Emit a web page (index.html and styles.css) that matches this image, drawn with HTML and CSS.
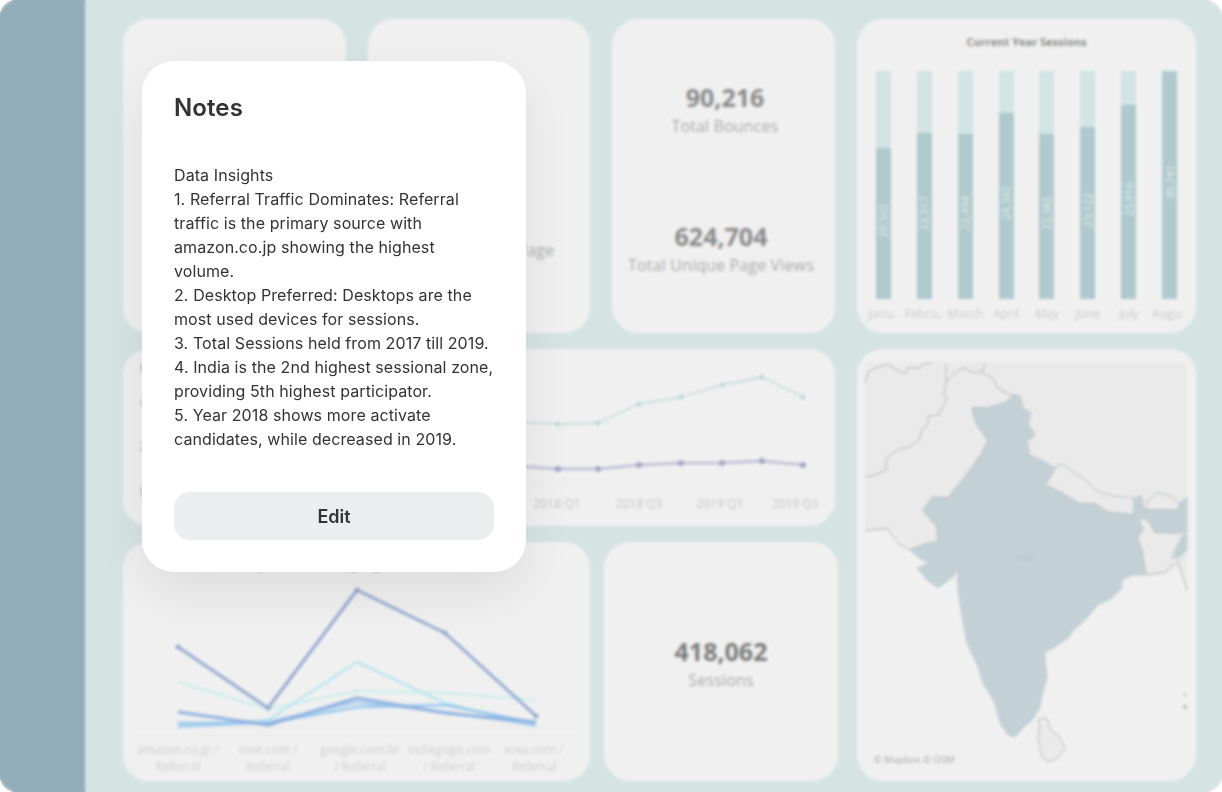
FILE: index.html
```html
<!DOCTYPE html>
<html lang="en">
<head>
<meta charset="utf-8">
<title>Notes</title>
<link rel="stylesheet" href="styles.css">
</head>
<body>
<div class="frame">
  <div class="dashboard">
    <aside class="sidebar"></aside>
    <main class="content">
      <div class="left">
        <div class="row row-top">
          <section class="card card-first"></section>
          <section class="card card-second stats stats-second">
            <div class="stat"><div class="stat-label">Avg. Views per Page</div></div>
          </section>
          <section class="card card-first stats">
            <div class="stat stat-right"><div class="stat-value">90,216</div><div class="stat-label">Total Bounces</div></div>
            <div class="stat stat-left"><div class="stat-value">624,704</div><div class="stat-label">Total Unique Page Views</div></div>
          </section>
        </div>
        <section class="card row-mid">
          <svg class="chart" viewBox="123 349 712 177" aria-label="Sessions by quarter">
            <g class="axis-text"><text x="140" y="372">6</text><text x="140" y="406">4</text><text x="140" y="451">2</text><text x="140" y="496">0</text></g>
            <line class="grid" x1="500" y1="482" x2="822" y2="482"/>
            <polyline class="q-top" points="500,421 558,424 598,423 639,404 681,397 722,385 762,377 803,397"/>
            <g class="q-top-dots"><circle cx="558" cy="424" r="2.5"/><circle cx="598" cy="423" r="2.5"/><circle cx="639" cy="404" r="2.5"/><circle cx="681" cy="397" r="2.5"/><circle cx="722" cy="385" r="2.5"/><circle cx="762" cy="377" r="2.5"/><circle cx="803" cy="397" r="2.5"/></g>
            <polyline class="q-bottom" points="500,465 558,469 598,469 639,465 681,463 722,463 762,461 803,465"/>
            <g class="q-bottom-dots"><circle cx="558" cy="469" r="3"/><circle cx="598" cy="469" r="3"/><circle cx="639" cy="465" r="3"/><circle cx="681" cy="463" r="3"/><circle cx="722" cy="463" r="3"/><circle cx="762" cy="461" r="3"/><circle cx="803" cy="465" r="3"/></g>
            <g class="tick-text"><text x="557" y="508">2018 Q1</text><text x="639" y="508">2018 Q3</text><text x="720" y="508">2019 Q1</text><text x="795" y="508">2019 Q3</text></g>
          </svg>
        </section>
        <div class="row row-bottom">
          <section class="card card-wide">
            <svg class="chart" viewBox="123 542 467 239" aria-label="Sessions by referral source">
              <text class="chart-title" x="201" y="569">Sessions by Referral Landing Page</text>
              <line class="grid" x1="135" y1="727" x2="578" y2="727"/>
              <line class="grid" x1="135" y1="735" x2="578" y2="735"/>
              <polyline class="s3" points="178,682 268,709 357,691 445,693 536,700"/>
              <polyline class="s2" points="178,725 268,720 357,662 445,703 536,727"/>
              <polyline class="s6" points="178,727 268,722 357,702 445,712 536,725"/>
              <polyline class="s5" points="178,723 268,723 357,707 445,705 536,723"/>
              <polyline class="s4" points="178,712 268,725 357,698 445,713 536,722"/>
              <polyline class="s1" points="178,647 268,708 357,590 445,633 536,716"/>
              <g class="s1-dots"><circle cx="178" cy="647" r="2.5"/><circle cx="268" cy="708" r="2.5"/><circle cx="357" cy="590" r="2.5"/><circle cx="445" cy="633" r="2.5"/><circle cx="536" cy="716" r="2.5"/></g>
              <g class="tick-text tick-soft">
                <text x="178" y="754">amazon.co.jp /</text><text x="178" y="771">Referral</text>
                <text x="268" y="754">cnet.com /</text><text x="268" y="771">Referral</text>
                <text x="360" y="754">google.com.br</text><text x="360" y="771">/ Referral</text>
                <text x="449" y="754">indiegogo.com</text><text x="449" y="771">/ Referral</text>
                <text x="534" y="754">xrea.com /</text><text x="534" y="771">Referral</text>
              </g>
            </svg>
          </section>
          <section class="card card-sessions stats">
            <div class="stat"><div class="stat-value stat-strong">418,062</div><div class="stat-label">Sessions</div></div>
          </section>
        </div>
      </div>
      <div class="right">
        <section class="card card-bars">
          <h2 class="bars-title">Current Year Sessions</h2>
          <div class="bars">
            <div class="bar-col"><div class="bar"><div class="bar-fill" style="height:66.4%"><span class="bar-value">20,502</span></div></div><div class="bar-label">Janu..</div></div>
            <div class="bar-col"><div class="bar"><div class="bar-fill" style="height:72.7%"><span class="bar-value">22,517</span></div></div><div class="bar-label">Febru..</div></div>
            <div class="bar-col"><div class="bar"><div class="bar-fill" style="height:72.4%"><span class="bar-value">22,434</span></div></div><div class="bar-label">March</div></div>
            <div class="bar-col"><div class="bar"><div class="bar-fill" style="height:81.5%"><span class="bar-value">24,342</span></div></div><div class="bar-label">April</div></div>
            <div class="bar-col"><div class="bar"><div class="bar-fill" style="height:72.4%"><span class="bar-value">22,385</span></div></div><div class="bar-label">May</div></div>
            <div class="bar-col"><div class="bar"><div class="bar-fill" style="height:75.4%"><span class="bar-value">23,122</span></div></div><div class="bar-label">June</div></div>
            <div class="bar-col"><div class="bar"><div class="bar-fill" style="height:85%"><span class="bar-value">25,916</span></div></div><div class="bar-label">July</div></div>
            <div class="bar-col"><div class="bar"><div class="bar-fill" style="height:100%"><span class="bar-value">30,741</span></div></div><div class="bar-label">Augu..</div></div>
          </div>
        </section>
        <section class="card card-map">
          <svg class="chart" viewBox="857 349 339 432" aria-label="Map of India">
            <path class="land" d="M865 362H1187V590L1184 585 1180 572 1177 565 1174 572 1170 570 1165 574 1150 576 1140 570 1060 560 930 565 910 550 899 540 887 528 865 531Z"/>
            <path class="india" d="M1015 395L1020.7 396.7 1023 408 1031 413 1028 425 1035 433 1033 438 1027 440 1030 455 1041.7 460 1055 468 1045 485 1062 493 1078 503 1095 504 1108 512 1133 515 1134 498 1142 496 1144 510 1178 510 1180 503 1186 498H1187V533L1175 533 1155 532 1148 520 1138 518 1143 530 1137 538 1142 550 1145 570 1147 575 1133 575 1122 580 1122 588 1112 598 1098 605 1085 620 1072 632 1068 638 1055 647 1045 652 1045 660 1047 677 1042 695 1040 708 1032 720 1023 728 1015 737 1008 735 1000 723 995 703 983 683 978 667 967 643 962 617 958 590 957 568 953 577 938 588 927 580 917 568 930 563 922 560 910 550 925 544 938 542 937 527 923 510 933 497 948 498 965 477 982 453 988 440 977 425 972 408 988 408 1005 403Z"/>
            <path class="india" d="M1183 535L1175 550 1172 558 1180 557 1187 550V535Z"/>
            <path class="border" d="M865 383L868 372 875 368 888 364 897 370 905 374 908 368 920 368 923 364 932 363"/>
            <path class="border" d="M946 363V382L955 373 962 368 972 372 982 372 986 363M983 373L993 378 998 388 1010 395 1015 395"/>
            <path class="border" d="M946 382L944 393 947 400 942 408 938 415 929 416 927 425 922 430 919 440 910 447 900 449 890 455 886 460 886 470 875 475 866 477"/>
            <path class="border" d="M865 531L887 528 898 543 910 550"/>
            <path class="border" d="M1147 575L1165 572 1175 563M1177 560L1184 580 1187 590"/>
            <path class="border-soft" d="M1015 395L1005 403 988 408 972 408 977 425 988 440 982 453 965 477 948 498 933 497 923 510 937 527 938 542 925 544 910 550"/>
            <path class="border-soft" d="M1055 468L1045 485 1062 493 1078 503 1095 504 1108 512 1133 515M1055 468L1062 464 1075 473 1088 482 1095 490 1112 496 1134 498M1145 510L1178 510 1180 505 1172 497 1158 492 1148 500 1145 510"/>
            <path class="border-soft" d="M1138 518L1143 530 1137 538 1142 550 1145 570M1148 520L1155 532 1175 533"/>
            <path class="lanka" d="M1043 717L1048 720 1050 730 1060 737 1065 748 1058 758 1048 762 1042 757 1038 737 1040 727 1038 720Z"/>
            <circle class="dot" cx="1185" cy="695" r="1.2"/>
            <circle class="dot" cx="1185" cy="707" r="1.8"/>
            <text class="map-label" x="1025" y="561">India</text>
            <text class="map-credit" x="874" y="763">© Mapbox © OSM</text>
          </svg>
        </section>
      </div>
    </main>
  </div>
  <div class="veil"></div>
  <div class="modal">
    <h1 class="modal-title">Notes</h1>
    <p class="modal-body">Data Insights<br>1. Referral Traffic Dominates: Referral traffic is the primary source with amazon.co.jp showing the highest volume.<br>2. Desktop Preferred: Desktops are the most used devices for sessions.<br>3. Total Sessions held from 2017 till 2019.<br>4. India is the 2nd highest sessional zone, providing 5th highest participator.<br>5. Year 2018 shows more activate candidates, while decreased in 2019.</p>
    <button class="modal-button" type="button">Edit</button>
  </div>
</div>
</body>
</html>
```
FILE: styles.css
```css
* { box-sizing: border-box; }
html, body { margin: 0; padding: 0; background: #fff; }
body { width: 1222px; height: 792px; overflow: hidden; font-family: "Open Sans", "Liberation Sans", sans-serif; }

.frame { position: relative; width: 1222px; height: 792px; overflow: hidden; border-radius: 16px; background: #d5e4e3; }
.dashboard { display: flex; width: 100%; height: 100%; }
.sidebar { flex: 0 0 85px; background: #91adb9; }
.content { flex: 1; display: flex; gap: 22px; padding: 19px 26px 11px 38px; }
.left { flex: 0 0 712px; min-width: 0; display: flex; flex-direction: column; gap: 16px; }
.right { flex: 0 0 339px; display: flex; flex-direction: column; gap: 16px; }
.row { display: flex; }
.row-top { flex: 0 0 314px; gap: 22px; }
.row-mid { flex: 0 0 177px; }
.row-bottom { flex: 0 0 239px; gap: 14px; }

.card { background: #f0f0f0; border-radius: 26px; overflow: hidden; }
.card-first { flex: 0 0 223px; }
.card-second { flex: 0 0 222px; }
.card-wide { flex: 0 0 467px; }
.card-sessions { flex: 0 0 234px; }
.card-bars { flex: 0 0 314px; padding: 16px 6px 0; }
.card-map { flex: 0 0 432px; }
.chart { display: block; width: 100%; height: 100%; }

.stats { display: flex; flex-direction: column; align-items: center; gap: 83px; padding-top: 63px; }
.stats-second { padding-top: 217px; }
.card-sessions { padding-top: 94px; }
.stat { text-align: center; }
.stat-right { margin-left: 3px; }
.stat-left { margin-right: 5px; }
.stat-value { font-size: 25px; line-height: 30px; font-weight: 700; color: #8a8a8a; }
.stat-strong { color: #7b7b7b; }
.stat-label { font-size: 16px; line-height: 24px; letter-spacing: .15px; color: #adadad; margin-top: 2px; white-space: nowrap; }

.bars-title { margin: 0; font-size: 11px; line-height: 14px; font-weight: 700; color: #8d8d8d; text-align: center; }
.bars { display: flex; margin-top: 22px; }
.bar-col { flex: 1; display: flex; flex-direction: column; align-items: center; }
.bar { position: relative; width: 15px; height: 228px; background: #d2e4e3; display: flex; flex-direction: column; justify-content: flex-end; }
.bar-fill { background: #afc9cd; display: flex; align-items: center; justify-content: center; padding-bottom: 6px; }
.bar-value { writing-mode: vertical-rl; transform: rotate(180deg); font-size: 11px; line-height: 12px; color: #e4eeee; white-space: nowrap; }
.bar-label { margin-top: 7px; font-size: 12px; line-height: 16px; color: #cdcdcd; white-space: nowrap; }

.grid { stroke: #e8e8e8; stroke-width: 1; }
.axis-text text { font-size: 13px; fill: #a4a4a4; }
.tick-text text { font-size: 12px; fill: #c8c8c8; text-anchor: middle; }
.tick-soft text { fill: #d2d2d2; }
.chart-title { font-size: 11px; font-weight: 700; fill: #8d8d8d; }
polyline { fill: none; stroke-linejoin: round; }
.q-top { stroke: #c6dedb; stroke-width: 1.8; }
.q-top-dots circle { fill: #bcd6d3; }
.q-bottom { stroke: #b9bcd5; stroke-width: 2.5; }
.q-bottom-dots circle { fill: #a3a6c6; }
.s1 { stroke: #95a9d0; stroke-width: 3; }
.s1-dots circle { fill: #95a9d0; }
.s2 { stroke: #bbe6ee; stroke-width: 2.5; }
.s3 { stroke: #cdeeeb; stroke-width: 2.5; }
.s4 { stroke: #8fb0de; stroke-width: 3; }
.s5 { stroke: #93c6ec; stroke-width: 2.5; }
.s6 { stroke: #a8cdf0; stroke-width: 2.5; }

.land { fill: #e9eae9; }
.india { fill: #c3d1d7; stroke: #bcc8cd; stroke-width: .8; }
.border { fill: none; stroke: #b2b2b2; stroke-width: 1; }
.border-soft { fill: none; stroke: #b7babb; stroke-width: .9; }
.lanka { fill: #e9eae9; stroke: #b9b9b9; stroke-width: 1; }
.dot { fill: #a8a8a8; }
.map-label { font-size: 9px; fill: #b4c2c8; text-anchor: middle; }
.map-credit { font-size: 9.5px; fill: #a8a8a8; }

.veil { position: absolute; inset: 0; backdrop-filter: blur(1.8px); }

.modal { position: absolute; left: 142px; top: 61px; width: 384px; height: 511px; padding: 32px; background: #fff; border-radius: 32px; box-shadow: 0 20px 50px rgba(0, 0, 0, .08); font-family: Inter, "Liberation Sans", sans-serif; color: #333; }
.modal-title { margin: 0; font-size: 24px; line-height: 30px; font-weight: 600; letter-spacing: .1px; }
.modal-body { margin: 40px 0 0; font-size: 16px; line-height: 24px; letter-spacing: .09px; height: 312px; }
.modal-button { display: block; width: 100%; height: 48px; margin-top: 17px; border: 0; border-radius: 16px; background: #ecedef; font-family: inherit; font-size: 18px; font-weight: 600; color: #333; }
```
